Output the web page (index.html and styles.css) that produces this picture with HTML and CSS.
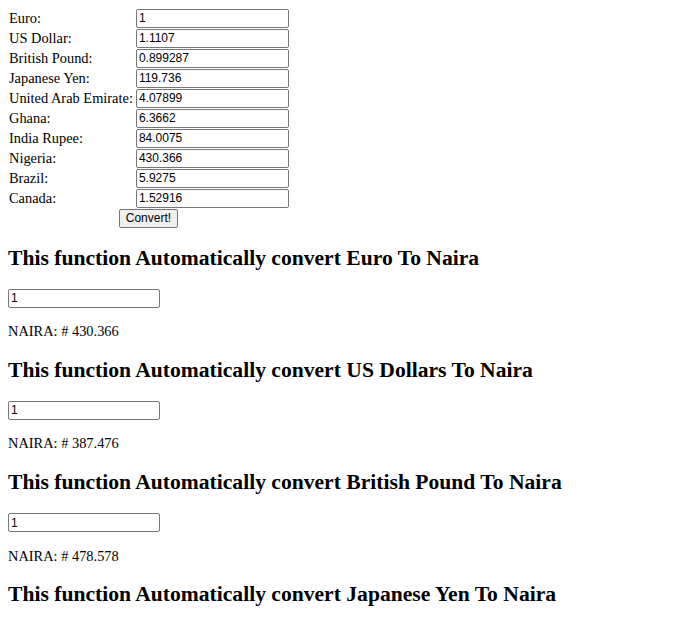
FILE: index.html
```html
<!DOCTYPE html>
<html>
<head>
<meta charset="utf-8">
<title>Currency Converter</title>
<link rel="stylesheet" href="styles.css">
</head>
<body>
<form class="rates-form">
  <table class="rates">
    <tr><td class="label">Euro:</td><td class="field-cell"><input class="box" type="text" value="1"></td></tr>
    <tr><td class="label">US Dollar:</td><td class="field-cell"><input class="box" type="text" value="1.1107"></td></tr>
    <tr><td class="label">British Pound:</td><td class="field-cell"><input class="box" type="text" value="0.899287"></td></tr>
    <tr><td class="label">Japanese Yen:</td><td class="field-cell"><input class="box" type="text" value="119.736"></td></tr>
    <tr><td class="label">United Arab Emirate:</td><td class="field-cell"><input class="box" type="text" value="4.07899"></td></tr>
    <tr><td class="label">Ghana:</td><td class="field-cell"><input class="box" type="text" value="6.3662"></td></tr>
    <tr><td class="label">India Rupee:</td><td class="field-cell"><input class="box" type="text" value="84.0075"></td></tr>
    <tr><td class="label">Nigeria:</td><td class="field-cell"><input class="box" type="text" value="430.366"></td></tr>
    <tr><td class="label">Brazil:</td><td class="field-cell"><input class="box" type="text" value="5.9275"></td></tr>
    <tr><td class="label">Canada:</td><td class="field-cell"><input class="box" type="text" value="1.52916"></td></tr>
    <tr><td class="button-cell" colspan="2"><button class="btn" type="button">Convert!</button></td></tr>
  </table>
</form>

<h2 class="title">This function Automatically convert Euro To Naira</h2>
<div class="field"><input class="box" type="text" value="1"></div>
<p class="result">NAIRA: # 430.366</p>

<h2 class="title">This function Automatically convert US Dollars To Naira</h2>
<div class="field"><input class="box" type="text" value="1"></div>
<p class="result">NAIRA: # 387.476</p>

<h2 class="title">This function Automatically convert British Pound To Naira</h2>
<div class="field"><input class="box" type="text" value="1"></div>
<p class="result">NAIRA: # 478.578</p>

<h2 class="title title-last">This function Automatically convert Japanese Yen To Naira</h2>
</body>
</html>
```
FILE: styles.css
```css
html, body {
  background: #fff;
}
body {
  margin: 8px;
  font-family: "Liberation Serif", "Times New Roman", serif;
  font-size: 14.4px;
  color: #000;
}
.rates-form {
  margin: 0;
}
.rates {
  border-collapse: collapse;
  border-spacing: 0;
}
.rates td {
  height: 20px;
  padding: 0;
  vertical-align: middle;
}
.rates td.label {
  padding: 0 3px 0 1px;
  white-space: nowrap;
}
.rates td.button-cell {
  text-align: center;
}
.box {
  display: block;
  box-sizing: border-box;
  width: 152px;
  height: 19px;
  margin: 0;
  padding: 1px 2px;
  border: 1px solid #767676;
  border-radius: 2px;
  font-family: "Liberation Sans", Arial, sans-serif;
  font-size: 12px;
  color: #000;
  background: #fff;
}
.rates .box {
  width: 153px;
}
.btn {
  display: inline-block;
  box-sizing: border-box;
  height: 19px;
  margin: 0;
  padding: 0 6px;
  border: 1px solid #767676;
  border-radius: 2px;
  background: #efefef;
  font-family: "Liberation Sans", Arial, sans-serif;
  font-size: 12px;
  color: #000;
}
.title {
  font-size: 21.6px;
  font-weight: bold;
  margin: 17.9px 0;
}
.title-last {
  margin-bottom: 0;
}
.field {
  height: 20px;
}
.result {
  margin: 14.4px 0;
}
```
